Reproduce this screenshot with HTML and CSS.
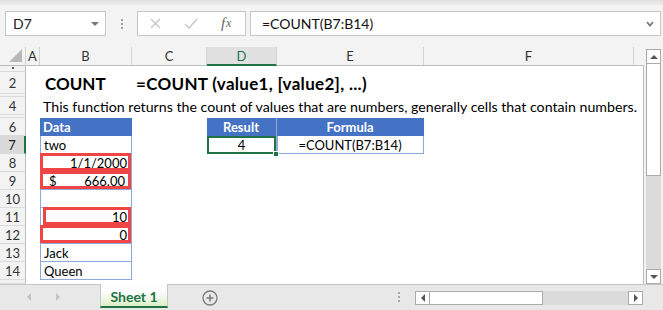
FILE: index.html
```html
<!DOCTYPE html>
<html lang="en">
<head>
    <meta charset="UTF-8">
    <meta name="viewport" content="width=device-width, initial-scale=1.0">
    <title>COUNT - Excel</title>
    <link rel="stylesheet" href="styles.css">
</head>
<body>

<div class="excel">
    <!-- Barra de fórmulas -->
    <div class="formula-bar">
        <div class="name-box"><span>D7</span><span class="caret"></span></div>
        <div class="grip"></div>
        <div class="fx-buttons">
            <span class="fx-btn btn-cancel">
                <svg width="11" height="11" viewBox="0 0 11 11"><path d="M1 1L10 10M10 1L1 10" stroke="#c4c4c4" stroke-width="1.3" fill="none"/></svg>
            </span>
            <span class="fx-btn btn-enter">
                <svg width="14" height="11" viewBox="0 0 14 11"><path d="M1 6L5 10L13 1" stroke="#c4c4c4" stroke-width="1.3" fill="none"/></svg>
            </span>
            <span class="fx-btn btn-fx"><i>f</i><i class="fx-x">x</i></span>
        </div>
        <div class="formula-input">
            <span>=COUNT(B7:B14)</span>
            <svg width="8" height="6" viewBox="0 0 8 6"><path d="M1 1L4 4.5L7 1" stroke="#777" stroke-width="1.8" fill="none"/></svg>
        </div>
    </div>

    <div class="workarea">
        <!-- Hoja -->
        <div class="sheet">
            <div class="cells-bg"></div>

            <div class="corner"><span class="select-all"></span></div>
            <div class="col-head">A</div>
            <div class="col-head">B</div>
            <div class="col-head">C</div>
            <div class="col-head active">D</div>
            <div class="col-head">E</div>
            <div class="col-head">F</div>
            <div class="col-head edge"></div>

            <div class="row-head"><span class="stub"></span></div>
            <div class="row-head">2</div>
            <div class="row-head"></div>
            <div class="row-head">4</div>
            <div class="row-head"></div>
            <div class="row-head">6</div>
            <div class="row-head active">7</div>
            <div class="row-head">8</div>
            <div class="row-head">9</div>
            <div class="row-head">10</div>
            <div class="row-head">11</div>
            <div class="row-head">12</div>
            <div class="row-head">13</div>
            <div class="row-head">14</div>
            <div class="row-head"></div>

            <!-- Título y descripción -->
            <div class="cell title title-name row-2 col-b">COUNT</div>
            <div class="cell title title-syntax row-2 col-c">=COUNT (value1, [value2], ...)</div>
            <div class="cell desc row-4 col-b">This function returns the count of values that are numbers, generally cells that contain numbers.</div>

            <!-- Tabla de datos -->
            <div class="cell tbl-head row-6 col-b">Data</div>
            <div class="cell tbl-cell row-7 col-b">two</div>
            <div class="cell tbl-cell num flagged row-8 col-b">1/1/2000</div>
            <div class="cell tbl-cell acct flagged row-9 col-b"><span>$</span><span>666.00</span></div>
            <div class="cell tbl-cell row-10 col-b"></div>
            <div class="cell tbl-cell num flagged shift row-11 col-b">10</div>
            <div class="cell tbl-cell num flagged row-12 col-b">0</div>
            <div class="cell tbl-cell row-13 col-b">Jack</div>
            <div class="cell tbl-cell row-14 col-b">Queen</div>

            <!-- Resultado -->
            <div class="cell tbl-head center split row-6 col-d">Result</div>
            <div class="cell tbl-head center row-6 col-e">Formula</div>
            <div class="cell tbl-cell center selected row-7 col-d">4<span class="fill-handle"></span></div>
            <div class="cell tbl-cell center row-7 col-e">=COUNT(B7:B14)</div>
        </div>

        <!-- Barra de desplazamiento vertical -->
        <div class="vscroll">
            <div class="sbtn"><span class="tri-up"></span></div>
            <div class="vthumb"></div>
            <div class="track"></div>
            <div class="sbtn"><span class="tri-down"></span></div>
        </div>
    </div>

    <!-- Pestañas -->
    <div class="tabbar">
        <div class="tab-nav">
            <span class="tri-left"></span>
            <span class="tri-right"></span>
        </div>
        <div class="sheet-tab">Sheet 1</div>
        <div class="add-sheet">
            <svg width="16" height="16" viewBox="0 0 16 16">
                <circle cx="8" cy="8" r="7" stroke="#7a7a7a" stroke-width="1.3" fill="none"/>
                <path d="M8 4.5V11.5M4.5 8H11.5" stroke="#7a7a7a" stroke-width="1.5"/>
            </svg>
        </div>
        <div class="tab-grip"></div>
        <div class="hscroll">
            <div class="sbtn"><span class="tri-left dark"></span></div>
            <div class="hthumb"></div>
            <div class="track"></div>
            <div class="sbtn"><span class="tri-right dark"></span></div>
        </div>
    </div>
</div>

</body>
</html>
```

FILE: styles.css
```css
body {
    margin: 0;
    padding: 0;
    font-family: Lato, "Liberation Sans", sans-serif;
    color: #000;
}

/* Ventana principal */
.excel {
    width: 663px;
    height: 310px;
    background: #f3f3f3;
    display: flex;
    flex-direction: column;
    overflow: hidden;
}

/* Barra de fórmulas */
.formula-bar {
    height: 47px;
    box-sizing: border-box;
    padding: 11px 0 0 5px;
    display: flex;
    align-items: flex-start;
    background: linear-gradient(#dedede, #f3f3f3 6px);
}

.name-box {
    width: 101px;
    height: 25px;
    box-sizing: border-box;
    border: 1px solid #c6c6c6;
    background: #fff;
    display: flex;
    align-items: center;
    justify-content: space-between;
    padding: 0 6px 0 7px;
    font-size: 14px;
    color: #222;
}

.caret {
    width: 0;
    height: 0;
    border-left: 4px solid transparent;
    border-right: 4px solid transparent;
    border-top: 4px solid #777;
}

.grip {
    width: 2px;
    height: 10px;
    margin: 8px 14px 0 15px;
    background: repeating-linear-gradient(#a0a0a0 0 2px, transparent 2px 4px);
}

.fx-buttons {
    width: 109px;
    height: 25px;
    box-sizing: border-box;
    border: 1px solid #c6c6c6;
    background: #fff;
    display: flex;
    align-items: center;
}

.fx-btn {
    display: flex;
    align-items: center;
    justify-content: center;
}

.btn-cancel { width: 36px; }
.btn-enter { width: 34px; }
.btn-fx {
    width: 38px;
    font-family: "Liberation Serif", serif;
    color: #666;
    font-size: 15px;
}

.fx-x {
    font-size: 12px;
    margin-left: 1px;
}

.formula-input {
    width: 411px;
    height: 25px;
    margin-left: 4px;
    box-sizing: border-box;
    border: 1px solid #c6c6c6;
    background: #fff;
    display: flex;
    align-items: center;
    justify-content: space-between;
    padding: 0 6px 0 11px;
    font-size: 14px;
    color: #111;
}

/* Zona de trabajo */
.workarea {
    display: flex;
    height: 237px;
}

.sheet {
    width: 644px;
    display: grid;
    grid-template-columns: 26px 14px 92px 75px 70px 147px 210px 10px;
    grid-template-rows: 19px 6px 22px 3px 18px 3px repeat(9, 18px) 4px;
}

.cells-bg {
    grid-area: 2 / 2 / 17 / 9;
    background: #fff;
    border-right: 1px solid #bdbdbd;
}

/* Encabezados */
.corner,
.col-head,
.row-head {
    box-sizing: border-box;
    background: #f3f3f3;
    display: flex;
    align-items: center;
    justify-content: center;
    font-size: 13px;
    color: #333;
    overflow: hidden;
}

.corner {
    border-right: 1px solid #d4d4d4;
    border-bottom: 1px solid #bdbdbd;
    align-items: flex-end;
    justify-content: flex-end;
    padding: 0 3px 3px 0;
}

.select-all {
    width: 0;
    height: 0;
    border-left: 13px solid transparent;
    border-bottom: 13px solid #b8b8b8;
}

.col-head {
    border-right: 1px solid #d4d4d4;
    border-bottom: 1px solid #bdbdbd;
}

.col-head.edge {
    border-right: none;
}

.col-head.active {
    background: #e1e1e1;
    color: #217346;
    border-bottom: 2px solid #217346;
}

.row-head {
    grid-column: 1;
    border-right: 1px solid #bdbdbd;
    border-bottom: 1px solid #dadada;
}

.row-head.active {
    background: #d9d9d9;
    border-right: 2px solid #217346;
    color: #222;
}

.stub {
    width: 2px;
    height: 2px;
    background: #555;
    align-self: flex-start;
    margin-top: 1px;
}

/* Posiciones en la hoja */
.row-2 { grid-row: 3; }
.row-4 { grid-row: 5; }
.row-6 { grid-row: 7; }
.row-7 { grid-row: 8; }
.row-8 { grid-row: 9; }
.row-9 { grid-row: 10; }
.row-10 { grid-row: 11; }
.row-11 { grid-row: 12; }
.row-12 { grid-row: 13; }
.row-13 { grid-row: 14; }
.row-14 { grid-row: 15; }

.col-b { grid-column: 3; }
.col-c { grid-column: 4 / 9; }
.col-d { grid-column: 5; }
.col-e { grid-column: 6; }

/* Celdas */
.cell {
    position: relative;
    box-sizing: border-box;
    display: flex;
    align-items: center;
    padding: 0 4px 0 3px;
    font-size: 13px;
    white-space: nowrap;
}

.title {
    font-weight: bold;
    font-size: 17px;
}

.title-name { padding-left: 5px; }
.title-syntax {
    padding-left: 4px;
    letter-spacing: 0.3px;
}

.desc {
    grid-column: 3 / 9;
    font-size: 14.2px;
}

.tbl-head {
    background: #4472c4;
    color: #fff;
    font-weight: bold;
}

.tbl-head.split {
    border-right: 1px solid #8eaadb;
}

.tbl-cell {
    border-left: 1px solid #8eaadb;
    border-right: 1px solid #8eaadb;
    border-bottom: 1px solid #8eaadb;
}

.center { justify-content: center; }
.num { justify-content: flex-end; }

.acct {
    justify-content: space-between;
    padding: 0 6px 0 8px;
}

/* Marcas rojas */
.flagged::after {
    content: "";
    position: absolute;
    left: -1px;
    right: 0;
    top: -1px;
    bottom: 0;
    border: 3px solid #f04545;
}

.flagged.shift::after {
    left: 2px;
}

/* Celda activa */
.selected::after {
    content: "";
    position: absolute;
    left: -1px;
    right: 0;
    top: 0;
    bottom: -1px;
    border: 2px solid #217346;
}

.fill-handle {
    position: absolute;
    right: -3px;
    bottom: -4px;
    width: 4px;
    height: 4px;
    background: #217346;
    border: 1px solid #fff;
    z-index: 2;
}

/* Barras de desplazamiento */
.vscroll {
    width: 15px;
    margin: 2px 0 0 2px;
    background: #dbdbdb;
    display: flex;
    flex-direction: column;
}

.sbtn {
    box-sizing: border-box;
    border: 1px solid #ababab;
    background: #fff;
    display: flex;
    align-items: center;
    justify-content: center;
}

.vscroll .sbtn { height: 15px; }

.vthumb {
    height: 112px;
    box-sizing: border-box;
    border: 1px solid #ababab;
    border-top: none;
    background: #fff;
}

.track { flex: 1; }

.tri-up,
.tri-down {
    width: 0;
    height: 0;
    border-left: 4px solid transparent;
    border-right: 4px solid transparent;
}

.tri-up { border-bottom: 4px solid #555; }
.tri-down { border-top: 4px solid #555; }

.tri-left,
.tri-right {
    width: 0;
    height: 0;
    border-top: 4px solid transparent;
    border-bottom: 4px solid transparent;
}

.tri-left { border-right: 4px solid #c2c2c2; }
.tri-right { border-left: 4px solid #c2c2c2; }
.tri-left.dark { border-right-color: #555; }
.tri-right.dark { border-left-color: #555; }

/* Pestañas de hojas */
.tabbar {
    flex: 1;
    display: flex;
    align-items: flex-start;
    background: #e8e8e8;
    border-top: 1px solid #c6c6c6;
}

.tab-nav {
    width: 100px;
    height: 24px;
    display: flex;
    align-items: center;
    padding-left: 27px;
    gap: 25px;
    box-sizing: border-box;
}

.sheet-tab {
    width: 68px;
    height: 24px;
    margin-top: -1px;
    box-sizing: border-box;
    padding-top: 2px;
    border-left: 1px solid #c6c6c6;
    border-right: 1px solid #c6c6c6;
    border-bottom: 2px solid #217346;
    background: linear-gradient(#fdfdfd 35%, #dcefc9);
    color: #217346;
    font-weight: bold;
    font-size: 14px;
    display: flex;
    align-items: center;
    justify-content: center;
}

.add-sheet {
    margin: 5px 0 0 34px;
    height: 16px;
}

.tab-grip {
    width: 2px;
    height: 10px;
    margin: 7px 0 0 180px;
    background: repeating-linear-gradient(#a8a8a8 0 2px, transparent 2px 4px);
}

.hscroll {
    width: 228px;
    height: 14px;
    margin: 6px 0 0 15px;
    background: #dbdbdb;
    display: flex;
}

.hscroll .sbtn { width: 15px; }

.hthumb {
    width: 113px;
    box-sizing: border-box;
    border: 1px solid #ababab;
    border-left: none;
    background: #fff;
}
```
